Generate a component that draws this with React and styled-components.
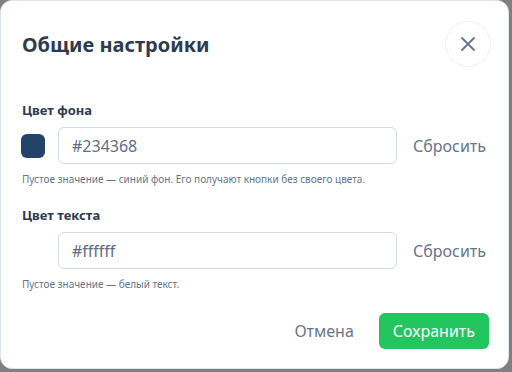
import React from "react";
import styled, { createGlobalStyle } from "styled-components";

const GlobalStyle = createGlobalStyle`
    html, body {
        margin: 0;
        padding: 0;
        background: #7f7f7f;
        font-family: "Noto Sans", "Open Sans", sans-serif;
    }
`;

const Modal = styled.div`
    box-sizing: border-box;
    width: 509px;
    height: 369px;
    background: #ffffff;
    border: 1px solid #dde4ee;
    border-radius: 12px;
    padding: 20px 19px 0 20px;
    display: flex;
    flex-direction: column;
`;

const Header = styled.div`
    display: flex;
    align-items: center;
    justify-content: space-between;
    margin-bottom: 34px;
`;

const Title = styled.h2`
    margin: 0 0 0 1px;
    font-size: 20px;
    font-weight: 700;
    color: #2f3b4e;
`;

const CloseButton = styled.button`
    width: 46px;
    height: 46px;
    margin-right: -2px;
    border-radius: 50%;
    border: 1px solid #eef0f3;
    background: #ffffff;
    display: flex;
    align-items: center;
    justify-content: center;
    padding: 0;
    color: #66758c;
`;

const Field = styled.div`
    display: flex;
    flex-direction: column;
    margin-bottom: ${(p) => p.$gap}px;
`;

const Label = styled.div`
    margin-left: 1px;
    font-size: 13px;
    font-weight: 700;
    color: #2f3b4e;
    margin-bottom: 8px;
`;

const Row = styled.div`
    display: flex;
    align-items: center;
`;

const Swatch = styled.div`
    width: 24px;
    height: 24px;
    border-radius: 6px;
    background: ${(p) => p.$color};
    margin-right: 13px;
    flex-shrink: 0;
`;

const Input = styled.div`
    box-sizing: border-box;
    width: 339px;
    height: 37px;
    border: 1px solid #d3dbe6;
    border-radius: 6px;
    padding: 0 13px;
    display: flex;
    align-items: center;
    font-size: 16px;
    color: #5f6d82;
`;

const ResetButton = styled.span`
    margin-left: 16px;
    font-size: 16px;
    color: #66758c;
`;

const Hint = styled.div`
    margin: 8px 0 0 1px;
    font-size: 10px;
    color: #66758c;
`;

const Footer = styled.div`
    display: flex;
    justify-content: flex-end;
    align-items: center;
    gap: 25px;
    margin-top: 22px;
`;

const CancelButton = styled.span`
    font-size: 16px;
    color: #66758c;
`;

const SaveButton = styled.button`
    height: 36px;
    padding: 0 14px;
    border: none;
    border-radius: 6px;
    background: #22c55e;
    color: #ffffff;
    font-family: inherit;
    font-size: 16px;
`;

export default function App() {
    return (
        <>
            <GlobalStyle />
            <Modal>
                <Header>
                    <Title>Общие настройки</Title>
                    <CloseButton>
                        <svg width="16" height="16" viewBox="0 0 16 16" fill="none" stroke="currentColor" strokeWidth="1.8" strokeLinecap="round">
                            <path d="M2 2 L14 14 M14 2 L2 14" />
                        </svg>
                    </CloseButton>
                </Header>
                <Field $gap={20}>
                    <Label>Цвет фона</Label>
                    <Row>
                        <Swatch $color="#234368" />
                        <Input>#234368</Input>
                        <ResetButton>Сбросить</ResetButton>
                    </Row>
                    <Hint>Пустое значение — синий фон. Его получают кнопки без своего цвета.</Hint>
                </Field>
                <Field $gap={0}>
                    <Label>Цвет текста</Label>
                    <Row>
                        <Swatch $color="#ffffff" />
                        <Input>#ffffff</Input>
                        <ResetButton>Сбросить</ResetButton>
                    </Row>
                    <Hint>Пустое значение — белый текст.</Hint>
                </Field>
                <Footer>
                    <CancelButton>Отмена</CancelButton>
                    <SaveButton>Сохранить</SaveButton>
                </Footer>
            </Modal>
        </>
    );
}
